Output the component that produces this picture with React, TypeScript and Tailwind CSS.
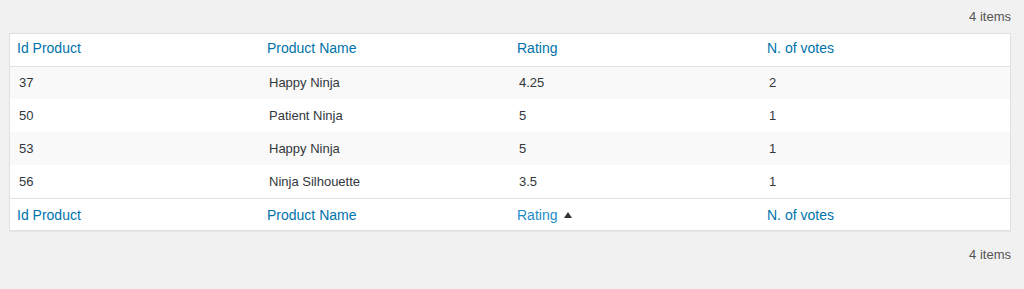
import React from "react";

const rows = [
  { id: "37", name: "Happy Ninja", rating: "4.25", votes: "2" },
  { id: "50", name: "Patient Ninja", rating: "5", votes: "1" },
  { id: "53", name: "Happy Ninja", rating: "5", votes: "1" },
  { id: "56", name: "Ninja Silhouette", rating: "3.5", votes: "1" },
];

function HeadRow({ footer }: { footer?: boolean }) {
  const cls = footer
    ? "h-[32px] border-t border-[#e1e1e1] pl-[7px] pr-[8px] pt-[3px] text-left font-normal text-[14px] text-[#0073aa] align-middle"
    : "h-[32px] border-b border-[#e1e1e1] pl-[7px] pr-[8px] pb-[2px] text-left font-normal text-[14px] text-[#0073aa] align-middle";
  return (
    <tr>
      <th className={cls + " w-[250px]"}>Id Product</th>
      <th className={cls + " w-[250px]"}>Product Name</th>
      <th className={cls + " w-[250px]"}>
        {footer ? (
          <span className="inline-flex items-center gap-[7px] text-[#1e8cc8]">
            Rating
            <span className="inline-block h-0 w-0 border-x-[4px] border-b-[6px] border-x-transparent border-b-[#333] mb-[2px]" />
          </span>
        ) : (
          "Rating"
        )}
      </th>
      <th className={cls}>N. of votes</th>
    </tr>
  );
}

export default function App() {
  return (
    <div
      className="min-h-[289px] w-[1024px] bg-[#f1f1f1] text-[13px] text-[#32373c]"
      style={{ fontFamily: '"Liberation Sans", Arial, sans-serif' }}
    >
      <div className="flex h-[33px] items-center justify-end pr-[13px] text-[#555]">4 items</div>
      <div className="ml-[9px] w-[1002px] border border-[#e1e1e1] bg-white shadow-[0_1px_1px_rgba(0,0,0,0.04)]">
        <table className="w-full border-collapse table-fixed">
          <thead>
            <HeadRow />
          </thead>
          <tbody>
            {rows.map((r, i) => (
              <tr key={i} className={i % 2 === 0 ? "bg-[#f9f9f9]" : "bg-white"}>
                <td className="h-[33px] pl-[9px] pr-[10px] align-middle">{r.id}</td>
                <td className="h-[33px] pl-[9px] pr-[10px] align-middle">{r.name}</td>
                <td className="h-[33px] pl-[9px] pr-[10px] align-middle">{r.rating}</td>
                <td className="h-[33px] pl-[9px] pr-[10px] align-middle">{r.votes}</td>
              </tr>
            ))}
          </tbody>
          <tfoot>
            <HeadRow footer />
          </tfoot>
        </table>
      </div>
      <div className="flex h-[48px] items-center justify-end pr-[13px] text-[#555]">4 items</div>
    </div>
  );
}
